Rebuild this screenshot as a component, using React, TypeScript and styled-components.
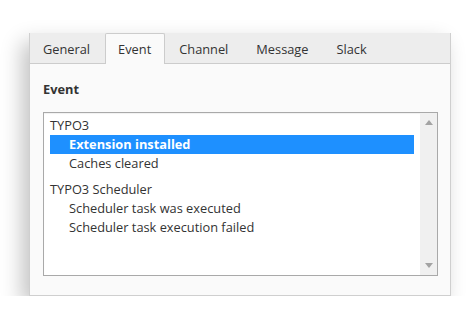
import React from "react"
import styled, {createGlobalStyle} from "styled-components"

const GlobalStyle = createGlobalStyle`
  html, body {
    margin: 0;
    padding: 0;
    background: #ffffff;
  }
  body {
    font-family: "Open Sans", "Noto Sans", sans-serif;
    color: #333333;
  }
`

const Page = styled.div`
  padding: 33px 0 0 29px;
`

const Panel = styled.div`
  width: 422px;
  height: 263px;
  box-sizing: border-box;
  background: #fafafa;
  border: 1px solid #cfcfcf;
  border-top: none;
  box-shadow: -7px 9px 20px rgba(0, 0, 0, 0.24);
  display: flex;
  flex-direction: column;
`

const TabBar = styled.div`
  display: flex;
  height: 31px;
  box-sizing: border-box;
  background: #ededed;
  border-bottom: 1px solid #cccccc;
`

const Tab = styled.div<{active?: boolean}>`
  display: flex;
  align-items: center;
  padding: 0 13px 0 12px;
  margin-right: 1px;
  font-size: 12.8px;
  color: #333333;
  box-sizing: border-box;
  height: ${props => (props.active ? "31px" : "30px")};
  background: ${props => (props.active ? "#fafafa" : "transparent")};
  border: 1px solid ${props => (props.active ? "#cccccc" : "transparent")};
  border-bottom: none;
  border-radius: 2px 2px 0 0;
`

const Body = styled.div`
  flex: 1;
  display: flex;
  flex-direction: column;
  padding: 16px 12px 19px 13px;
`

const Heading = styled.div`
  font-size: 12.8px;
  font-weight: 700;
  line-height: 18px;
  margin-bottom: 14px;
`

const ListBox = styled.div`
  flex: 1;
  display: flex;
  background: #ffffff;
  border: 1px solid #a9a9a9;
  box-shadow: inset 0 1px 1px rgba(0, 0, 0, 0.06);
`

const Options = styled.div`
  flex: 1;
  padding: 3px 6px 0 6px;
`

const Group = styled.div`
  margin-bottom: 7px;
`

const GroupLabel = styled.div`
  font-size: 12.8px;
  line-height: 19px;
  color: #333333;
`

const Option = styled.div<{selected?: boolean}>`
  font-size: 12.8px;
  line-height: 19px;
  padding-left: 19px;
  color: ${props => (props.selected ? "#ffffff" : "#333333")};
  background: ${props => (props.selected ? "#1e90ff" : "transparent")};
  font-weight: ${props => (props.selected ? 700 : 400)};
`

const Scrollbar = styled.div`
  width: 17px;
  background: #f0f0f0;
  display: flex;
  flex-direction: column;
  justify-content: space-between;
  align-items: center;
  padding: 7px 0;
`

const Arrow = ({down}: {down?: boolean}) => (
  <svg width="8" height="5" viewBox="0 0 8 5">
    <path d={down ? "M0 0 L8 0 L4 5 Z" : "M0 5 L8 5 L4 0 Z"} fill="#a3a3a3" />
  </svg>
)

const groups = [
  {
    label: "TYPO3",
    options: ["Extension installed", "Caches cleared"]
  },
  {
    label: "TYPO3 Scheduler",
    options: ["Scheduler task was executed", "Scheduler task execution failed"]
  }
]

const tabs = ["General", "Event", "Channel", "Message", "Slack"]

export default function App() {
  return (
    <Page>
      <GlobalStyle />
      <Panel>
        <TabBar>
          {tabs.map(t => (
            <Tab key={t} active={t === "Event"}>
              {t}
            </Tab>
          ))}
        </TabBar>
        <Body>
          <Heading>Event</Heading>
          <ListBox>
            <Options>
              {groups.map(g => (
                <Group key={g.label}>
                  <GroupLabel>{g.label}</GroupLabel>
                  {g.options.map(o => (
                    <Option key={o} selected={o === "Extension installed"}>
                      {o}
                    </Option>
                  ))}
                </Group>
              ))}
            </Options>
            <Scrollbar>
              <Arrow />
              <Arrow down />
            </Scrollbar>
          </ListBox>
        </Body>
      </Panel>
    </Page>
  )
}
